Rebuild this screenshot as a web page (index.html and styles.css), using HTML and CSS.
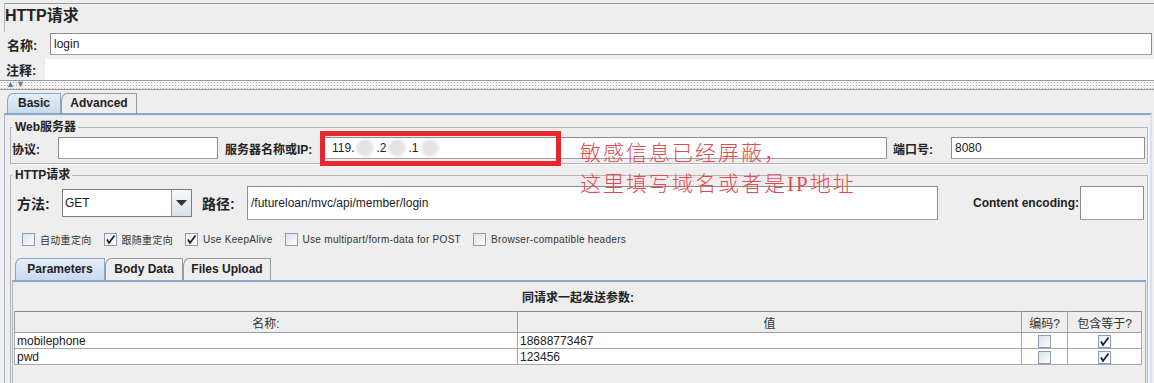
FILE: index.html
```html
<!DOCTYPE html>
<html lang="zh">
<head>
<meta charset="utf-8">
<title>HTTP请求</title>
<link rel="stylesheet" href="styles.css">
</head>
<body>
<div class="page">
  <div class="title">HTTP请求</div>
  <div class="row name-row">
    <span class="lbl name-lbl">名称:</span>
    <div class="field grow">login</div>
  </div>
  <div class="row comment-row">
    <span class="lbl comment-lbl">注释:</span>
    <div class="field plain grow"></div>
  </div>
  <div class="splitter"><span class="arrows">▲▼</span></div>

  <div class="tabs main-tabs">
    <div class="tab active t-basic">Basic</div>
    <div class="tab t-adv">Advanced</div>
  </div>
  <div class="tabpanel">
    <fieldset class="group web">
      <legend>Web服务器</legend>
      <div class="row web-row">
        <span class="lbl small proto-lbl">协议:</span>
        <div class="field w-proto"></div>
        <span class="lbl small server-lbl">服务器名称或IP:</span>
        <div class="field grow server-field">119.<span class="blur"></span>.2<span class="blur"></span>.1<span class="blur"></span></div>
        <span class="lbl small port-lbl">端口号:</span>
        <div class="field w-port">8080</div>
      </div>
    </fieldset>

    <fieldset class="group http">
      <legend>HTTP请求</legend>
      <div class="row method-row">
        <span class="lbl big method-lbl">方法:</span>
        <div class="combo">
          <div class="combo-val">GET</div>
          <div class="combo-btn"><svg width="11" height="6" viewBox="0 0 11 6"><path d="M0 0 H11 L5.5 6 Z" fill="#333"/></svg></div>
        </div>
        <span class="lbl big path-lbl">路径:</span>
        <div class="field grow tall">/futureloan/mvc/api/member/login</div>
        <span class="lbl small enc-lbl">Content encoding:</span>
        <div class="field tall w-enc"></div>
      </div>

      <div class="checks">
        <label class="chk"><span class="box"></span><span class="ctext">自动重定向</span></label>
        <label class="chk"><span class="box on"><svg width="11" height="11" viewBox="0 0 11 11"><path d="M2 5.5 L4 9 L9.5 1.5" fill="none" stroke="#1a1a1a" stroke-width="1.7"/></svg></span><span class="ctext">跟随重定向</span></label>
        <label class="chk"><span class="box on"><svg width="11" height="11" viewBox="0 0 11 11"><path d="M2 5.5 L4 9 L9.5 1.5" fill="none" stroke="#1a1a1a" stroke-width="1.7"/></svg></span><span class="ctext">Use KeepAlive</span></label>
        <label class="chk"><span class="box"></span><span class="ctext">Use multipart/form-data for POST</span></label>
        <label class="chk"><span class="box"></span><span class="ctext">Browser-compatible headers</span></label>
      </div>

      <div class="tabs sub-tabs">
        <div class="tab active t-params">Parameters</div>
        <div class="tab t-body">Body Data</div>
        <div class="tab t-files">Files Upload</div>
      </div>
      <div class="subpanel">
        <div class="caption">同请求一起发送参数:</div>
        <table class="params">
          <colgroup>
            <col class="c-name"><col class="c-val"><col class="c-enc"><col class="c-eq">
          </colgroup>
          <thead>
            <tr><th>名称:</th><th>值</th><th>编码?</th><th>包含等于?</th></tr>
          </thead>
          <tbody>
            <tr>
              <td>mobilephone</td><td>18688773467</td>
              <td class="cc"><span class="box cell"></span></td>
              <td class="cc"><span class="box cell on"><svg width="11" height="11" viewBox="0 0 11 11"><path d="M2 5.5 L4 9 L9.5 1.5" fill="none" stroke="#1a1a1a" stroke-width="1.7"/></svg></span></td>
            </tr>
            <tr>
              <td>pwd</td><td>123456</td>
              <td class="cc"><span class="box cell"></span></td>
              <td class="cc"><span class="box cell on"><svg width="11" height="11" viewBox="0 0 11 11"><path d="M2 5.5 L4 9 L9.5 1.5" fill="none" stroke="#1a1a1a" stroke-width="1.7"/></svg></span></td>
            </tr>
          </tbody>
        </table>
      </div>
    </fieldset>
  </div>

  <div class="redbox"></div>
  <div class="note">敏感信息已经屏蔽，<br>这里填写域名或者是IP地址</div>
</div>
</body>
</html>
```

FILE: styles.css
```css
* { box-sizing: border-box; }
html, body { margin: 0; padding: 0; }
body {
  background: #eeeeee;
  font-family: "Liberation Sans", "Noto Sans CJK SC", sans-serif;
  font-size: 12px;
  color: #222;
}
.page {
  position: relative;
  width: 1154px;
  height: 383px;
  overflow: hidden;
}

.title {
  margin: 3px 0 0 4px;
  height: 29px;
  border-top: 1px solid #9a9a9a;
  border-left: 1px solid #b8b8b8;
  padding-left: 0;
  font-size: 16px;
  font-weight: bold;
  line-height: 24px;
  color: #222;
}

.row { display: flex; align-items: center; }
.grow { flex: 1 1 auto; min-width: 0; }

.lbl { font-weight: bold; font-size: 13px; color: #222; white-space: nowrap; }
.lbl.small { font-size: 12px; }
.lbl.big { font-size: 14px; }

.field {
  height: 22px;
  background: #fff;
  border: 1px solid #8c8c8c;
  border-bottom-color: #a0a0a0;
  padding-left: 3px;
  line-height: 20px;
  font-size: 12px;
  color: #222;
  white-space: nowrap;
  overflow: hidden;
}
.field.plain { border: none; background: #fff; }
.field.tall { height: 34px; line-height: 32px; }

.name-row { height: 22px; margin-top: 1px; }
.name-lbl { width: 50px; padding-left: 7px; }
.name-row .field { margin-right: 2px; }

.comment-row { height: 21px; margin-top: 4px; }
.comment-lbl { width: 45px; padding-left: 6px; }
.comment-row .field { height: 21px; }

.splitter {
  position: relative;
  height: 10px;
  border-top: 1px solid #9a9a9a;
  border-bottom: 1px solid #9a9a9a;
  background-color: #f2f2f2;
  background-image:
    radial-gradient(circle, #b4b4b4 0.6px, transparent 0.9px);
  background-size: 3px 3px;
}
.arrows {
  position: absolute;
  left: 6px;
  top: -1px;
  font-size: 9px;
  line-height: 9px;
  letter-spacing: 1px;
  color: #6a7b96;
}

.tabs { display: flex; align-items: flex-end; }
.main-tabs { margin-top: 3px; padding-left: 7px; height: 20px; }
.tab {
  height: 20px;
  border: 1px solid #9a9a9a;
  border-bottom: none;
  border-top-left-radius: 6px 8px;
  background: #eeeeee;
  font-weight: bold;
  font-size: 12px;
  line-height: 19px;
  text-align: center;
  color: #222;
}
.tab.active {
  background: linear-gradient(#e6eef8, #c9daee);
  border-color: #8fa3c2;
}
.t-basic { width: 54px; }
.t-adv { width: 76px; }

.tabpanel {
  margin-left: 4px;
  margin-right: 2px;
  height: 290px;
  border-top: 2px solid #8ea4c8;
  border-left: 1px solid #aab6c8;
  border-right: 2px solid #d8e2ef;
  box-shadow: inset 0 1px 0 #e3e9f3;
  padding: 5px 2px 0 5px;
}

fieldset.group {
  margin: 0;
  padding: 0;
  border: 1px solid #b4b4b4;
  box-shadow: 1px 1px 0 #fff;
  min-inline-size: 0;
}
fieldset.group legend {
  margin-left: 1px;
  padding: 0 2px 0 3px;
  font-weight: bold;
  font-size: 12px;
  line-height: 14px;
  color: #222;
}

fieldset.web { padding: 0 2px 4px 0; }
.web-row { margin-top: 3px; height: 22px; }
.proto-lbl { width: 47px; padding-left: 1px; font-size: 13px; }
.w-proto { width: 160px; }
.server-lbl { margin-left: 7px; width: 98px; }
.server-field { padding-left: 8px; }
.blur {
  display: inline-block;
  width: 14px;
  height: 14px;
  margin: 0 4px -3px;
  border-radius: 50%;
  background: #e4e4e4;
  box-shadow: 0 0 3px 2px #e8e8e8;
}
.port-lbl { margin-left: 6px; width: 58px; }
.w-port { width: 194px; }

fieldset.http { margin-top: 4px; padding: 0; height: 240px; }
.method-row { margin-top: 4px; height: 34px; padding-left: 6px; padding-right: 3px; }
.method-lbl { width: 45px; }
.combo {
  width: 130px;
  height: 28px;
  display: flex;
  border: 1px solid #7d7d7d;
  background: #fff;
}
.combo-val { flex: 1; padding-left: 2px; line-height: 26px; font-size: 12px; }
.combo-btn {
  width: 20px;
  border-left: 1px solid #9a9a9a;
  background: linear-gradient(#f8f8f8, #dbe2ea);
  display: flex;
  align-items: center;
  justify-content: center;
}
.path-lbl { margin-left: 10px; width: 45px; }
.enc-lbl { margin-left: 35px; width: 107px; }
.w-enc { width: 64px; }

.checks {
  display: flex;
  align-items: center;
  gap: 12px;
  margin-top: 12px;
  padding-left: 11px;
  height: 14px;
}
.chk { display: flex; align-items: center; gap: 5px; }
.ctext { font-size: 10px; color: #333; letter-spacing: 0.3px; white-space: nowrap; }
.box {
  width: 13px;
  height: 13px;
  border: 1px solid #8b9cb3;
  background: linear-gradient(135deg, #dbe3ee, #fbfcfe);
  display: inline-flex;
  align-items: center;
  justify-content: center;
}
.box.on { background: linear-gradient(135deg, #e8edf4, #ffffff); }

.sub-tabs { margin-top: 12px; padding-left: 3px; margin-left: 1px; height: 22px; }
.sub-tabs .tab { height: 22px; line-height: 21px; }
.t-params { width: 90px; }
.t-body { width: 78px; }
.t-files { width: 88px; }

.subpanel {
  margin-left: 1px;
  margin-right: 1px;
  height: 130px;
  border-top: 2px solid #8ea4c8;
  border-left: 1px solid #aab6c8;
  border-right: 1px solid #b4b4b4;
  box-shadow: inset 0 1px 0 #e3e9f3;
  padding: 0 3px 0 1px;
}
.caption {
  height: 29px;
  padding-top: 9px;
  text-align: center;
  font-weight: bold;
  font-size: 12px;
  line-height: 14px;
}

table.params {
  width: 100%;
  border-collapse: collapse;
  table-layout: fixed;
  background: #fff;
  border: 1px solid #8c8c8c;
}
.c-name { width: 503px; }
.c-val { width: 504px; }
.c-enc { width: 46px; }
.c-eq { width: 74px; }
table.params th {
  height: 21px;
  background: #eeeeee;
  border: 1px solid #a0a0a0;
  border-top: none;
  font-weight: normal;
  font-size: 12px;
  color: #333;
  padding: 0;
  text-align: center;
}
table.params td {
  height: 16px;
  border: 1px solid #a8a8a8;
  padding: 0 0 0 2px;
  font-size: 12px;
  line-height: 14px;
  color: #222;
  white-space: nowrap;
}
table.params td.cc { text-align: center; padding: 0; }
.box.cell { vertical-align: middle; width: 13px; height: 13px; }

.redbox {
  position: absolute;
  left: 320px;
  top: 131px;
  width: 241px;
  height: 35px;
  border: 5px solid #e8262d;
}
.note {
  position: absolute;
  left: 580px;
  top: 138px;
  font-family: "Liberation Serif", "Noto Sans CJK SC", serif;
  font-size: 21px;
  font-weight: 300;
  letter-spacing: 2px;
  line-height: 31px;
  color: #e24a52;
  white-space: nowrap;
}
```
